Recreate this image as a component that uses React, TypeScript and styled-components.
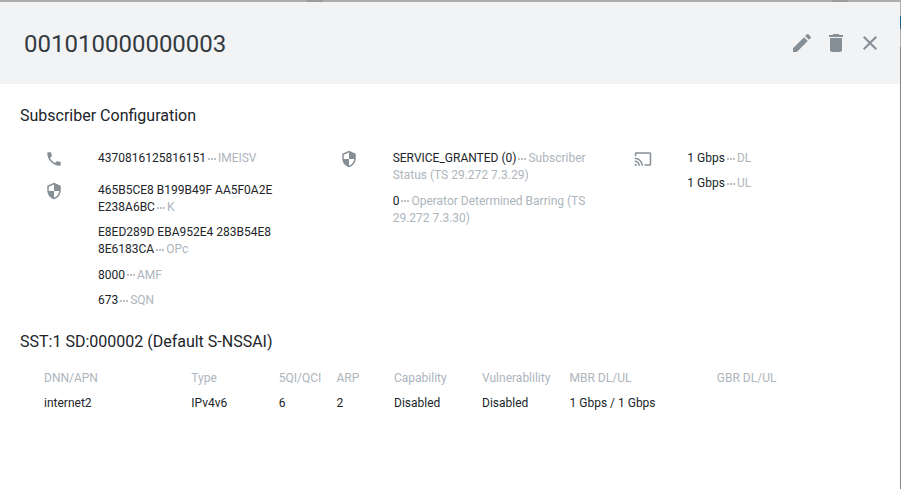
import React from 'react';
import styled, { createGlobalStyle } from 'styled-components';
import { MdEdit, MdDelete, MdClose, MdPhone, MdSecurity, MdCast, MdMoreHoriz } from 'react-icons/md';

const GlobalStyle = createGlobalStyle`
  * { box-sizing: border-box; }
  body { margin: 0; overflow: hidden; font-family: Roboto, sans-serif; color: #212529; }
`;

const Backdrop = styled.div`
  position: relative;
  width: 901px;
  height: 489px;
  padding: 2px 1px 0 0;
  background: #adadae;
`;

const Glimpse = styled.span<{ $x: number; $y: number; $w: number; $h: number; $color: string }>`
  position: absolute;
  left: ${p => p.$x}px;
  top: ${p => p.$y}px;
  width: ${p => p.$w}px;
  height: ${p => p.$h}px;
  background: ${p => p.$color};
`;

const Dialog = styled.div`
  height: 487px;
  background: #fff;
`;

const Header = styled.header`
  display: flex;
  align-items: center;
  justify-content: space-between;
  height: 82px;
  padding: 0 18px 0 24px;
  background: #f1f3f5;
`;

const Title = styled.h1`
  margin: 0;
  padding-top: 2px;
  font-size: 24px;
  line-height: 36px;
  font-weight: 400;
  color: #343a40;
`;

const Actions = styled.div`
  display: flex;
  gap: 10px;
  color: #868e96;
  font-size: 24px;
  svg { display: block; }
`;

const Section = styled.section`
  padding: 20px 0 0 20px;
`;

const SectionTitle = styled.h2`
  margin: 0;
  font-size: 16px;
  line-height: 24px;
  font-weight: 400;
`;

const Groups = styled.div`
  display: grid;
  grid-template-columns: repeat(3, 294.667px);
  height: 182px;
  padding: 14px 0 0 24px;
`;

const Group = styled.div`
  display: flex;
  flex-direction: column;
`;

const Entry = styled.div`
  display: grid;
  grid-template-columns: 54px 196px;
`;

const EntryIcon = styled.span`
  padding: 8px 0 0 1px;
  font-size: 18px;
  color: #868e96;
  svg { display: block; }
`;

const Values = styled.div`
  padding-top: 4.3px;
  padding-bottom: 2.257px;
`;

const Value = styled.div`
  padding: 4px 0;
  font-size: 12px;
  line-height: 17.143px;
`;

const Hint = styled.span`
  color: #adb5bd;
  svg { vertical-align: middle; }
`;

const Table = styled.div`
  padding: 12px 0 0 24px;
`;

const Row = styled.div<{ $head?: boolean }>`
  display: grid;
  grid-template-columns: 147.333px 87.4px 57.8px 57.5px 88px 87.5px 147.333px 147.333px;
  font-size: 12px;
  line-height: 25px;
  white-space: nowrap;
  color: ${p => (p.$head ? '#adb5bd' : '#212529')};
`;

type Item = [string, string];

const Property = ({ icon, items }: { icon: React.ReactNode; items: Item[] }) => (
  <Entry>
    <EntryIcon>{icon}</EntryIcon>
    <Values>
      {items.map(([value, label]) => (
        <Value key={label}>
          {value}
          <Hint><MdMoreHoriz />{label}</Hint>
        </Value>
      ))}
    </Values>
  </Entry>
);

const columns = ['DNN/APN', 'Type', '5QI/QCI', 'ARP', 'Capability', 'Vulnerablility', 'MBR DL/UL', 'GBR DL/UL'];
const session = ['internet2', 'IPv4v6', '6', '2', 'Disabled', 'Disabled', '1 Gbps / 1 Gbps', ''];

export default function App() {
  return (
    <>
      <GlobalStyle />
      <Backdrop>
        <Glimpse $x={307} $y={0} $w={16} $h={2} $color="#9c9c9d" />
        <Glimpse $x={832} $y={0} $w={16} $h={2} $color="#9c9c9d" />
        <Glimpse $x={900} $y={16} $w={1} $h={13} $color="#246491" />
        <Glimpse $x={900} $y={47} $w={1} $h={442} $color="#868686" />
        <Dialog>
          <Header>
            <Title>001010000000003</Title>
            <Actions><MdEdit /><MdDelete /><MdClose /></Actions>
          </Header>
          <Section>
            <SectionTitle>Subscriber Configuration</SectionTitle>
            <Groups>
              <Group>
                <Property icon={<MdPhone />} items={[['4370816125816151', 'IMEISV']]} />
                <Property
                  icon={<MdSecurity />}
                  items={[
                    ['465B5CE8 B199B49F AA5F0A2E E238A6BC', 'K'],
                    ['E8ED289D EBA952E4 283B54E8 8E6183CA', 'OPc'],
                    ['8000', 'AMF'],
                    ['673', 'SQN'],
                  ]}
                />
              </Group>
              <Group>
                <Property
                  icon={<MdSecurity />}
                  items={[
                    ['SERVICE_GRANTED (0)', 'Subscriber Status (TS 29.272 7.3.29)'],
                    ['0', 'Operator Determined Barring (TS 29.272 7.3.30)'],
                  ]}
                />
              </Group>
              <Group>
                <Property icon={<MdCast />} items={[['1 Gbps', 'DL'], ['1 Gbps', 'UL']]} />
              </Group>
            </Groups>
          </Section>
          <Section>
            <SectionTitle>SST:1 SD:000002 (Default S-NSSAI)</SectionTitle>
            <Table>
              <Row $head>{columns.map(name => <span key={name}>{name}</span>)}</Row>
              <Row>{session.map((text, i) => <span key={columns[i]}>{text}</span>)}</Row>
            </Table>
          </Section>
        </Dialog>
      </Backdrop>
    </>
  );
}
